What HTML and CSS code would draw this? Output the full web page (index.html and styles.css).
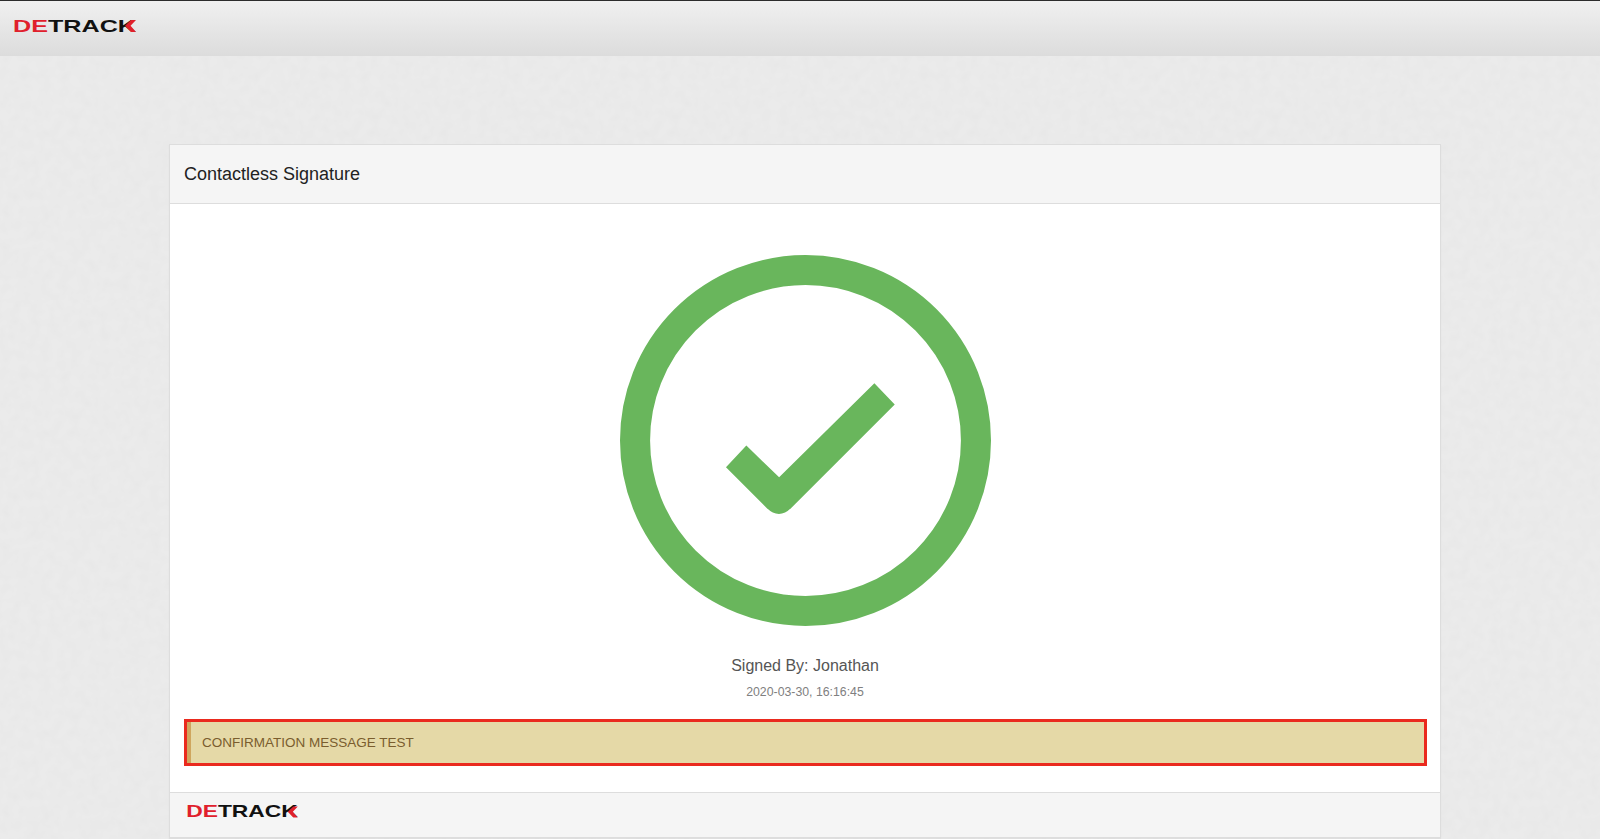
FILE: index.html
```html
<!DOCTYPE html>
<html lang="en">
<head>
<meta charset="utf-8">
<title>Contactless Signature</title>
<link rel="stylesheet" href="styles.css">
</head>
<body>
<header class="topbar">
  <svg class="logo logo-top" viewBox="0 0 124 20" role="img" aria-label="Detrack">
    <text class="logo-text" x="0" y="16" textLength="124" lengthAdjust="spacingAndGlyphs"><tspan class="logo-red">DE</tspan>TRAC<tspan>K</tspan></text>
    <polygon class="logo-chevron" points="124,4 119,4 113,9.8 119,16 124,16 118.5,9.8"/>
  </svg>
</header>
<main class="page">
  <section class="card">
    <div class="card-head">Contactless Signature</div>
    <div class="card-body">
      <svg class="check" viewBox="0 0 370 370" aria-hidden="true">
        <circle cx="185" cy="185" r="170" fill="none" stroke="#69b65c" stroke-width="30"/>
        <path fill="#69b65c" d="M126 190L158.7 221.7 253.7 128 274 149 171 252Q158.5 264.5 146 252L105.7 211.7Z"/>
      </svg>
      <p class="signed">Signed By: Jonathan</p>
      <p class="stamp">2020-03-30, 16:16:45</p>
      <div class="alert">CONFIRMATION MESSAGE TEST</div>
    </div>
    <div class="card-foot">
      <svg class="logo logo-foot" viewBox="0 0 124 20" role="img" aria-label="Detrack">
        <text class="logo-text" x="0" y="16" textLength="124" lengthAdjust="spacingAndGlyphs"><tspan class="logo-red">DE</tspan>TRAC<tspan>K</tspan></text>
        <polygon class="logo-chevron" points="124,4 119,4 113,9.8 119,16 124,16 118.5,9.8"/>
      </svg>
    </div>
  </section>
</main>
</body>
</html>
```
FILE: styles.css
```css
* { box-sizing: border-box; }
html, body { height: 100%; }
body {
  margin: 0;
  overflow: hidden;
  background-color: #ebebeb;
  background-image: url("data:image/svg+xml,%3Csvg xmlns='http://www.w3.org/2000/svg' width='300' height='300'%3E%3Cfilter id='n'%3E%3CfeTurbulence type='fractalNoise' baseFrequency='.1' numOctaves='2'/%3E%3CfeColorMatrix values='0 0 0 0 0 0 0 0 0 0 0 0 0 0 0 0 0 0 1.4 -.55'/%3E%3C/filter%3E%3Crect width='300' height='300' filter='url(%23n)' opacity='.016'/%3E%3C/svg%3E");
  font-family: "Liberation Sans", Arial, sans-serif;
  color: #333;
}
.topbar {
  height: 56px;
  padding: 15px 0 0 13px;
  border-top: 1px solid #2c2c2c;
  background: linear-gradient(#f0f0f0, #dcdcdc);
}
.logo { display: block; }
.logo-top { width: 123px; height: 20px; }
.logo-foot { width: 112px; height: 18px; }
.logo-text {
  font-family: "Liberation Sans", Arial, sans-serif;
  font-weight: 700;
  font-size: 17.5px;
  fill: #111;
}
.logo-red { fill: #e0202c; }
.logo-chevron { fill: #e0202c; }
.page { padding: 88px 159px 0 169px; }
.card {
  background: #fff;
  border: 1px solid #ddd;
  box-shadow: 0 1px 1px rgba(0,0,0,.05);
}
.card-head {
  height: 59px;
  padding: 0 14px;
  display: flex;
  align-items: center;
  font-size: 18px;
  color: #222;
  background: #f5f5f5;
  border-bottom: 1px solid #ddd;
}
.card-body {
  padding: 51px 14px 26px;
  text-align: center;
}
.check {
  display: block;
  width: 371px;
  height: 371px;
  margin: 0 auto;
}
.signed {
  margin: 29px 0 0;
  font-size: 16px;
  line-height: 22px;
  color: #555;
}
.stamp {
  margin: 6px 0 0;
  font-size: 12.3px;
  line-height: 18px;
  color: #808080;
}
.alert {
  margin: 18px -1px 0 0;
  height: 47px;
  padding-left: 15px;
  display: flex;
  align-items: center;
  font-size: 13.5px;
  color: #7a5d2e;
  background: #e5d9a7;
  border: 3px solid #ea2a1e;
  box-shadow: inset 4px 0 0 #cfa65e;
}
.card-foot {
  height: 45px;
  padding: 10px 16px 0;
  background: #f5f5f5;
  border-top: 1px solid #ddd;
}
```
